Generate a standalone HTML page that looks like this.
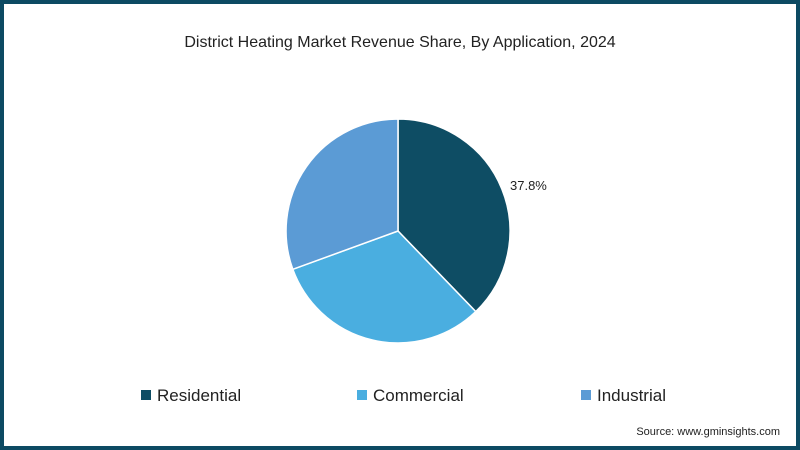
<!DOCTYPE html>
<html><head><style>
html,body{margin:0;padding:0}
body{width:800px;height:450px;position:relative;background:#fff;font-family:"Liberation Sans",sans-serif;overflow:hidden}
.frame{position:absolute;inset:0;border:4px solid #0d4a63;box-sizing:border-box}
.t{position:absolute;top:34px;left:0;width:800px;text-align:center;font-size:16px;color:#222}
.lg{position:absolute;top:386px;font-size:17px;color:#222}
.lg span{display:inline-block;width:10px;height:10px;margin-right:6px;vertical-align:1px}
.src{position:absolute;right:20px;top:426px;font-size:11px;color:#222}
</style></head><body>
<div class="frame"></div>
<div class="t">District Heating Market Revenue Share, By Application, 2024</div>
<svg width="800" height="450" style="position:absolute;left:0;top:0">
<path d="M398,231 L398,119 A112,112 0 0 1 475.8,311.6 Z" fill="#0e4d64" stroke="#fff" stroke-width="1.5"/>
<path d="M398,231 L475.8,311.6 A112,112 0 0 1 292.8,269.3 Z" fill="#4aaee0" stroke="#fff" stroke-width="1.5"/>
<path d="M398,231 L292.8,269.3 A112,112 0 0 1 398,119 Z" fill="#5b9bd5" stroke="#fff" stroke-width="1.5"/>
<text x="510" y="190" font-size="13" fill="#222" font-family="Liberation Sans">37.8%</text>
</svg>
<div class="lg" style="left:141px"><span style="background:#0e4d64"></span>Residential</div>
<div class="lg" style="left:357px"><span style="background:#4aaee0"></span>Commercial</div>
<div class="lg" style="left:581px"><span style="background:#5b9bd5"></span>Industrial</div>
<div class="src">Source: www.gminsights.com</div>
</body></html>
